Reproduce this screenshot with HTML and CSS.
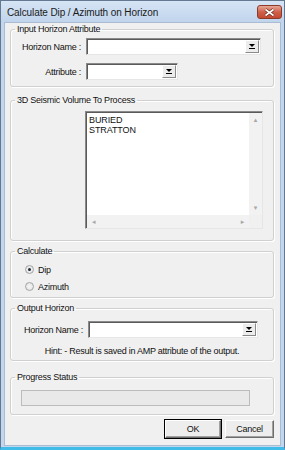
FILE: index.html
```html
<!DOCTYPE html>
<html lang="en">
<head>
    <meta charset="UTF-8">
    <title>Calculate Dip / Azimuth on Horizon</title>
    <link rel="stylesheet" href="styles.css">
</head>
<body>
    <div class="window">
        <div class="titlebar">
            <span class="title">Calculate Dip / Azimuth on Horizon</span>
            <button class="close">
                <svg width="11" height="9" viewBox="0 0 11 9">
                    <path d="M1.5 1.5 L9.5 7.5 M9.5 1.5 L1.5 7.5" stroke="#6b2a1c" stroke-width="3.2" fill="none"/>
                    <path d="M1.5 1.5 L9.5 7.5 M9.5 1.5 L1.5 7.5" stroke="#fff" stroke-width="1.6" fill="none"/>
                </svg>
            </button>
        </div>
        <div class="client">
            <fieldset class="group g-input">
                <legend>Input Horizon Attribute</legend>
                <div class="group-body">
                    <div class="row">
                        <label class="lbl">Horizon Name :</label>
                        <div class="combo combo-long"><span class="drop"><svg width="6" height="5" viewBox="0 0 6 5"><path d="M0 0 H6 L3 3 Z" fill="#000"/><rect x="0" y="4" width="6" height="1" fill="#000"/></svg></span></div>
                    </div>
                    <div class="row">
                        <label class="lbl">Attribute :</label>
                        <div class="combo combo-short"><span class="drop"><svg width="6" height="5" viewBox="0 0 6 5"><path d="M0 0 H6 L3 3 Z" fill="#000"/><rect x="0" y="4" width="6" height="1" fill="#000"/></svg></span></div>
                    </div>
                </div>
            </fieldset>

            <fieldset class="group g-volume">
                <legend>3D Seismic Volume To Process</legend>
                <div class="group-body">
                    <div class="listbox">
                        <div class="list-main">
                            <div class="items">
                                <div>BURIED</div>
                                <div>STRATTON</div>
                            </div>
                            <div class="vscroll">
                                <span class="arrow">&#9652;</span>
                                <span class="arrow">&#9662;</span>
                            </div>
                        </div>
                        <div class="hscroll">
                            <div class="htrack">
                                <span class="arrow">&#9666;</span>
                                <span class="arrow">&#9656;</span>
                            </div>
                            <div class="corner"></div>
                        </div>
                    </div>
                </div>
            </fieldset>

            <fieldset class="group g-calc">
                <legend>Calculate</legend>
                <div class="group-body">
                    <div class="radio-row"><span class="radio checked"></span>Dip</div>
                    <div class="radio-row"><span class="radio"></span>Azimuth</div>
                </div>
            </fieldset>

            <fieldset class="group g-output">
                <legend>Output Horizon</legend>
                <div class="group-body">
                    <div class="row">
                        <label class="lbl lbl-out">Horizon Name :</label>
                        <div class="combo combo-out"><span class="drop"><svg width="6" height="5" viewBox="0 0 6 5"><path d="M0 0 H6 L3 3 Z" fill="#000"/><rect x="0" y="4" width="6" height="1" fill="#000"/></svg></span></div>
                    </div>
                    <div class="hint">Hint: - Result is saved in AMP attribute of the output.</div>
                </div>
            </fieldset>

            <fieldset class="group g-progress">
                <legend>Progress Status</legend>
                <div class="group-body">
                    <div class="progress"></div>
                </div>
            </fieldset>

            <div class="actions">
                <button class="btn btn-default">OK</button>
                <button class="btn btn-cancel">Cancel</button>
            </div>
        </div>
    </div>
</body>
</html>
```

FILE: styles.css
```css
body {
    margin: 0;
    font-family: "Liberation Sans", Arial, sans-serif;
    font-size: 9px;
    letter-spacing: -0.25px;
    color: #111;
}

.window {
    width: 285px;
    height: 450px;
    box-sizing: border-box;
    display: flex;
    flex-direction: column;
    background: #c2d6ee;
    border: 1px solid #64788f;
    border-bottom: 3px solid #3fbde8;
    padding: 0 3px 1px 3px;
}

.titlebar {
    height: 21px;
    display: flex;
    align-items: center;
    justify-content: space-between;
    background: linear-gradient(#d6e5f5, #c0d4ec);
    margin: 0 -3px;
    padding: 0 2px 0 6px;
}

.title {
    font-size: 10px;
    letter-spacing: -0.1px;
    padding-top: 1px;
    color: #1a1a1a;
}

.close {
    width: 25px;
    height: 14px;
    margin-top: 1px;
    padding: 0;
    border: 1px solid #8c3a2a;
    border-radius: 3px;
    background: linear-gradient(#e6a897, #d0604a 50%, #c44a32);
    display: flex;
    align-items: center;
    justify-content: center;
}

.client {
    flex: 1;
    background: #f0f0f0;
    border: 1px solid #a9bcd2;
    display: flex;
    flex-direction: column;
    align-items: flex-start;
}

.group {
    box-sizing: border-box;
    width: 264px;
    margin: 0 0 0 5px;
    padding: 0;
    border: 1px solid #d0d0d0;
    border-radius: 3px;
    box-shadow: 1px 1px 0 #fff, inset 1px 1px 0 #fff;
}

.group legend {
    margin-left: 4px;
    padding: 0 2px;
    line-height: 12px;
}

.g-input {
    height: 64px;
}

.g-input .group-body {
    padding-top: 3px;
}

.g-volume {
    height: 147px;
    margin-top: 7px;
}

.g-volume .group-body {
    padding: 5px 0 0 74px;
}

.g-calc {
    height: 53px;
    margin-top: 4px;
}

.g-calc .group-body {
    padding: 4px 0 0 14px;
}

.g-output {
    height: 59px;
    margin-top: 4px;
}

.g-output .group-body {
    padding-top: 7px;
}

.g-progress {
    height: 44px;
    margin-top: 10px;
}

.g-progress .group-body {
    padding: 7px 0 0 10px;
}

.row {
    display: flex;
    align-items: center;
    gap: 5px;
    height: 17px;
    margin-bottom: 8px;
}

.lbl {
    width: 70px;
    text-align: right;
}

.lbl-out {
    width: 72px;
}

.combo {
    box-sizing: border-box;
    height: 17px;
    background: #fff;
    border: 1px solid;
    border-color: #8a8a8a #e6e6e6 #e6e6e6 #8a8a8a;
    box-shadow: inset 1px 1px 0 #5a5a5a;
    display: flex;
    justify-content: flex-end;
    align-items: center;
    padding-right: 1px;
}

.combo-long {
    width: 175px;
}

.combo-short {
    width: 92px;
}

.combo-out {
    width: 170px;
}

.drop {
    box-sizing: border-box;
    width: 14px;
    height: 13px;
    background: #ececec;
    border: 1px solid;
    border-color: #fff #8a8a8a #8a8a8a #fff;
    display: flex;
    align-items: center;
    justify-content: center;
}

.listbox {
    box-sizing: border-box;
    width: 178px;
    height: 118px;
    background: #fff;
    border: 1px solid;
    border-color: #8a8a8a #e6e6e6 #e6e6e6 #8a8a8a;
    box-shadow: inset 1px 1px 0 #5a5a5a;
    padding: 1px 0 0 1px;
    display: flex;
    flex-direction: column;
}

.list-main {
    flex: 1;
    display: flex;
}

.items {
    flex: 1;
    padding: 2px 0 0 2px;
    line-height: 10px;
    font-size: 9px;
    letter-spacing: -0.1px;
}

.vscroll {
    width: 13px;
    background: #f2f2f2;
    display: flex;
    flex-direction: column;
    justify-content: space-between;
    align-items: center;
    padding: 3px 0;
}

.hscroll {
    display: flex;
    height: 13px;
}

.htrack {
    flex: 1;
    background: #f2f2f2;
    display: flex;
    justify-content: space-between;
    align-items: center;
    padding: 0 5px;
}

.corner {
    width: 13px;
    background: #f0f0f0;
}

.arrow {
    color: #a8a8a8;
    font-family: "DejaVu Sans", sans-serif;
    font-size: 7px;
    line-height: 8px;
}

.radio-row {
    display: flex;
    align-items: center;
    gap: 4px;
    height: 17px;
}

.radio {
    box-sizing: border-box;
    width: 9px;
    height: 9px;
    border-radius: 50%;
    border: 1px solid #a4a4a4;
    background: radial-gradient(circle, #f6f6f6, #e0e0e0);
    display: flex;
    align-items: center;
    justify-content: center;
}

.radio.checked::after {
    content: "";
    width: 3px;
    height: 3px;
    border-radius: 50%;
    background: #1e2a3a;
}

.hint {
    text-align: center;
    margin-top: 1px;
}

.progress {
    box-sizing: border-box;
    width: 229px;
    height: 16px;
    border: 1px solid #bcbcbc;
    background: #e9e9e9;
}

.actions {
    align-self: stretch;
    display: flex;
    justify-content: flex-end;
    gap: 4px;
    margin-top: 5px;
    padding-right: 6px;
}

.btn {
    box-sizing: border-box;
    height: 18px;
    padding: 0;
    font-family: inherit;
    font-size: 9px;
    letter-spacing: -0.25px;
    color: #111;
    background: #ededed;
    border: 1px solid;
    border-color: #fff #6e6e6e #6e6e6e #fff;
    box-shadow: inset -1px -1px 0 #a0a0a0;
}

.btn-default {
    width: 56px;
    outline: 1px solid #000;
}

.btn-cancel {
    width: 49px;
}
```
